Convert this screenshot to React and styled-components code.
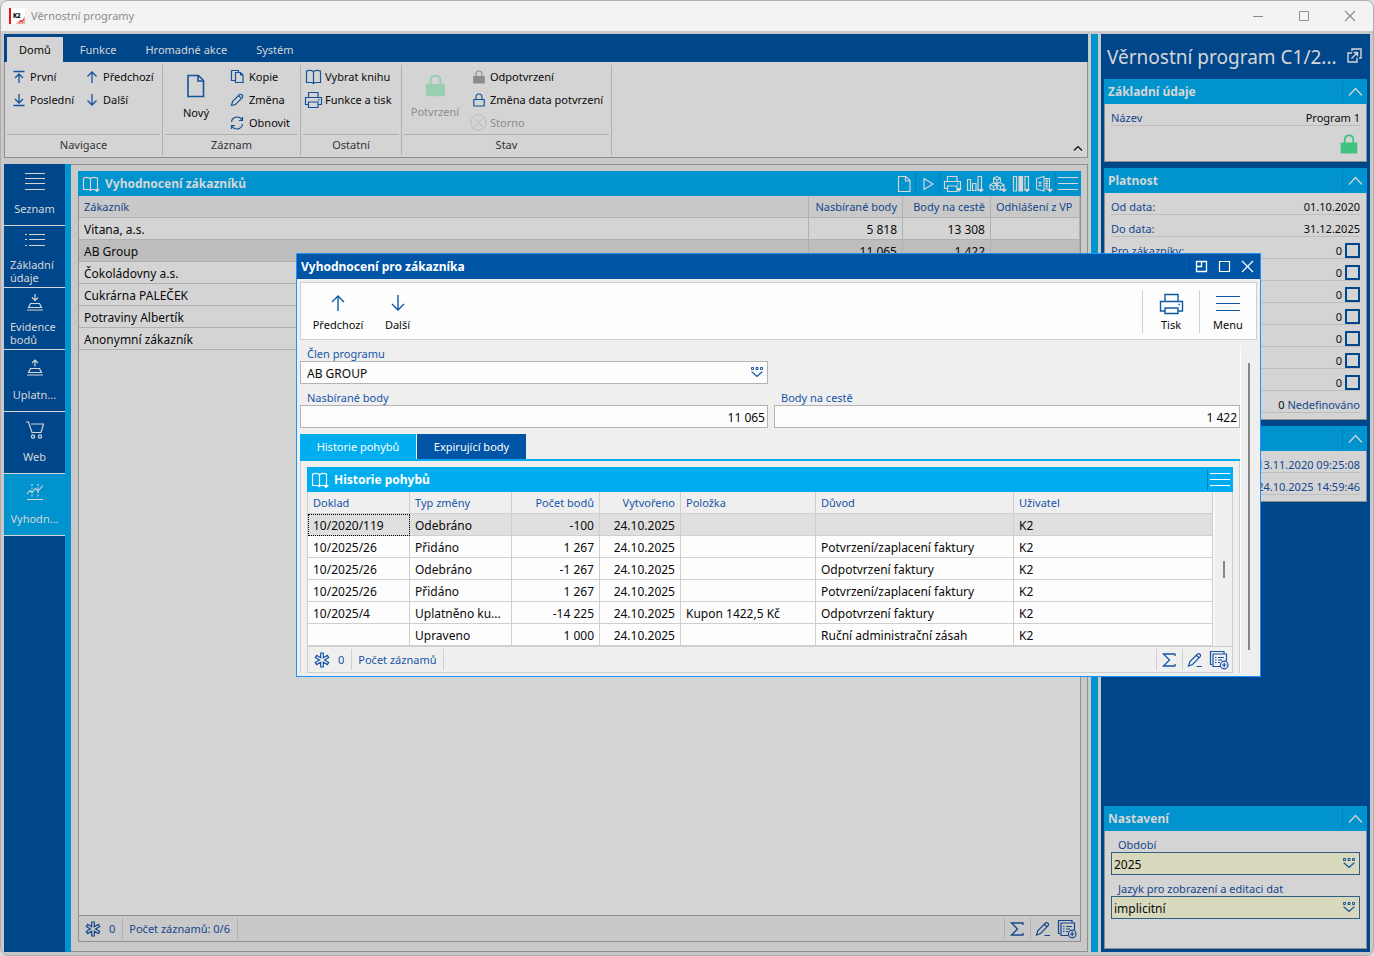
import React, { useState } from "react";
import styled, { createGlobalStyle } from "styled-components";

const GlobalStyle = createGlobalStyle`
  * {
    box-sizing: border-box;
  }
  body {
    margin: 0;
    background: #dcdcdc;
    color: #0a0a0a;
    font-family: "Noto Sans", "Open Sans", sans-serif;
    font-size: 12px;
    line-height: 16px;
  }
  button, input, select {
    font: inherit;
    color: inherit;
    margin: 0;
  }
  button {
    background: none;
    border: none;
    padding: 0;
    cursor: pointer;
  }
  h1, h2 {
    margin: 0;
  }
`;

// every icon is drawn on its own grid, w/h are the grid and the drawn size
const Icon = ({ w = 16, h = 16, sw = 1, children }) => (
  <IconSvg width={w} height={h} viewBox={`0 0 ${w} ${h}`} strokeWidth={sw}>
    {children}
  </IconSvg>
);

const K2Logo = () => (
  <Icon w={16} h={16}>
    <rect x="0" y="0" width="16" height="16" fill="#fff" stroke="none" />
    <rect x="0" y="0" width="2" height="16" fill="#e2122c" stroke="none" />
    <path d="M7 16 L10 12 L12 13 L16 8 V16 Z" fill="#f2a9a5" stroke="none" />
    <path d="M10 15 L12 12 L13 14 L15 11" stroke="#dc3a44" />
    <text
      x="4"
      y="10"
      fontSize="6"
      fontWeight="900"
      fill="#111"
      stroke="none"
      fontFamily="Open Sans"
    >
      K2
    </text>
  </Icon>
);
const FirstIcon = () => (
  <Icon w={14} h={14} sw={1.3}>
    <path d="M1.5 1.5 H12.5 M7 13 V4 M3 8 L7 4 L11 8" />
  </Icon>
);
const LastIcon = () => (
  <Icon w={14} h={14} sw={1.3}>
    <path d="M1.5 12.5 H12.5 M7 1 V10 M3 6 L7 10 L11 6" />
  </Icon>
);
const UpIcon = () => (
  <Icon w={14} h={14} sw={1.3}>
    <path d="M7 13 V2 M2.5 6.5 L7 2 L11.5 6.5" />
  </Icon>
);
const DownIcon = () => (
  <Icon w={14} h={14} sw={1.3}>
    <path d="M7 1 V12 M2.5 7.5 L7 12 L11.5 7.5" />
  </Icon>
);
const BigUpIcon = () => (
  <Icon w={18} h={20} sw={1.4}>
    <path d="M9 18 V3 M3 9 L9 3 L15 9" />
  </Icon>
);
const BigDownIcon = () => (
  <Icon w={18} h={20} sw={1.4}>
    <path d="M9 2 V17 M3 11 L9 17 L15 11" />
  </Icon>
);
const NewIcon = () => (
  <Icon w={20} h={24} sw={1.6}>
    <path d="M2 1.5 H12.5 L17.5 6.5 V22.5 H2 Z" />
    <path d="M12 1.5 V7 H17.5" />
  </Icon>
);
const PageIcon = () => (
  <Icon w={16} h={18} sw={1.2}>
    <path d="M2.5 1.5 H10 L14 5.5 V16.5 H2.5 Z M9.5 1.5 V6 H14" />
  </Icon>
);
const CopyIcon = () => (
  <Icon w={14} h={15} sw={1.2}>
    <path d="M5 11.5 H1.5 V1.5 H8.5 V3.5" />
    <path d="M5.5 3.5 H10.5 L13 6 V13.5 H5.5 Z M10.5 3.5 V6 H13" />
  </Icon>
);
const PencilIcon = () => (
  <Icon w={14} h={14} sw={1.2}>
    <path d="M1.5 12.5 L2.5 8.5 L9.5 1.5 Q11 0.8 12.2 2 Q13.2 3.2 12.5 4.5 L5.5 11.5 Z M8.5 2.7 L11.5 5.7" />
  </Icon>
);
const RefreshIcon = () => (
  <Icon w={14} h={14} sw={1.2}>
    <path d="M1.5 6 A5.6 5.6 0 0 1 12 4 M12.5 1 V4.5 H9 M12.5 8 A5.6 5.6 0 0 1 2 10 M1.5 13 V9.5 H5" />
  </Icon>
);
const BookIcon = ({ more }) => (
  <Icon w={18} h={18} sw={1.2}>
    <path d="M1.5 14.5 V3 Q5.5 1.5 8.5 3.5 Q11.5 1.5 15.5 3 V14.5 H10 L8.5 15.5 L7 14.5 Z M8.5 3.5 V15" />
    {more && (
      <path d="M12 14 H18 L15 17.5 Z" fill="currentColor" stroke="none" />
    )}
  </Icon>
);
const PrinterIcon = ({ more }) => (
  <Icon w={19} h={18} sw={1.2}>
    <path d="M4.5 6 V1.5 H14 V6 M4.5 13.5 H1.5 V6.5 H17.5 V13.5 H14 M4.5 11 H14 V16.5 H4.5 Z M14 8.8 H15.5" />
    {more && (
      <path d="M13 13.5 H19 L16 17 Z" fill="currentColor" stroke="none" />
    )}
  </Icon>
);
const BigPrinterIcon = () => (
  <Icon w={25} h={22} sw={1.4}>
    <path d="M6 8 V1.5 H19 V8 M6 18 H1.5 V8.5 H23.5 V18 H19 M6 15 H19 V20.5 H6 Z M19.5 11.5 H21" />
  </Icon>
);
const LockIcon = ({ size = 14, filled, color = "currentColor" }) => (
  <IconSvg
    width={size}
    height={size}
    viewBox="0 0 14 14"
    stroke={color}
    strokeWidth="1.2"
  >
    <path d="M4 6.5 V4.2 Q4 1 7 1 Q10 1 10 4.2 V6.5" />
    <path d="M1.8 6.5 H12.2 V13 H1.8 Z" fill={filled ? color : "none"} />
  </IconSvg>
);
const CancelIcon = () => (
  <Icon w={17} h={17} sw={1}>
    <circle cx="8.5" cy="8.5" r="7.7" />
    <path d="M4.5 4.5 L12.5 12.5 M12.5 4.5 L4.5 12.5" />
  </Icon>
);
const LinesIcon = ({ w = 20, h = 18, gap = 6 }) => (
  <Icon w={w} h={h} sw={1.2}>
    <path
      d={`M0 ${h / 2 - 0.5 - gap} H${w} M0 ${h / 2 - 0.5} H${w} M0 ${h / 2 - 0.5 + gap} H${w}`}
    />
  </Icon>
);
const ChevronIcon = ({ w = 16, h = 10 }) => (
  <Icon w={w} h={h} sw={1.2}>
    <path d={`M1 ${h - 1.5} L${w / 2} 1.5 L${w - 1} ${h - 1.5}`} />
  </Icon>
);
const PlayIcon = () => (
  <Icon w={14} h={16} sw={1.2}>
    <path d="M3 2.5 L12 8 L3 13.5 Z" />
  </Icon>
);
const ChartIcon = () => (
  <Icon w={18} h={18} sw={1.2}>
    <path d="M1.5 4.5 H4.5 V15.5 H1.5 Z M6.5 8.5 H10 V15.5 H6.5 Z M12 1.5 H15.5 V15.5 H12 Z" />
    <path d="M12 14 H18 L15 17.5 Z" fill="currentColor" stroke="none" />
  </Icon>
);
const CubesIcon = () => (
  <Icon w={18} h={18} sw={1.1}>
    <path d="M8 1.5 L11.5 3.2 V7 L8 8.8 L4.5 7 V3.2 Z M4.5 3.2 L8 5 L11.5 3.2 M8 5 V8.8" />
    <path d="M4.5 8 L8 9.8 V13.5 L4.5 15.2 L1 13.5 V9.8 Z M1 9.8 L4.5 11.5 L8 9.8 M4.5 11.5 V15" />
    <path d="M11.5 8 L15 9.8 V13.5 L11.5 15.2 L8 13.5 V9.8 M8 9.8 L11.5 11.5 L15 9.8 M11.5 11.5 V15" />
    <path d="M12 14 H18 L15 17.5 Z" fill="currentColor" stroke="none" />
  </Icon>
);
const ColumnsIcon = () => (
  <Icon w={18} h={18} sw={1.2}>
    <path d="M1.5 1.5 H4.5 V16 H1.5 Z M13 1.5 H16.5 V15 H13 Z" />
    <path d="M7 1.5 H10.5 V16 H7 Z" fill="currentColor" />
    <path d="M12 14 H18 L15 17.5 Z" fill="currentColor" stroke="none" />
  </Icon>
);
const ExcelIcon = () => (
  <Icon w={18} h={18} sw={1.1}>
    <path d="M1.5 3.5 L9 1.5 V16 L1.5 14 Z M9 3.5 H14.5 V14 H9 M3.5 6.5 L6.5 11.5 M6.5 6.5 L3.5 11.5" />
    <path d="M10 6 H13.5 M10 8.5 H13.5 M10 11 H13.5 M11.8 4 V13" />
    <path d="M12 14 H18 L15 17.5 Z" fill="currentColor" stroke="none" />
  </Icon>
);
const PopOutIcon = () => (
  <Icon w={15} h={15} sw={1.4}>
    <path d="M5 3 V1 H14 V10 H12 M5 5 H1 V14 H10 V10 M4.5 10.5 L10.5 4.5 M6.5 4.5 H10.5 V8.5" />
  </Icon>
);
const ListIcon = () => (
  <Icon w={22} h={18} sw={1.2}>
    <path d="M5 3.5 H21 M5 8.5 H21 M5 14.5 H21" />
    <path d="M1 3.5 H3 M1 8.5 H3 M1 14.5 H3" />
  </Icon>
);
const MenuLinesIcon = () => (
  <Icon w={22} h={20} sw={1.2}>
    <path d="M1 1.5 H21 M1 6.5 H21 M1 11.5 H21 M1 17.5 H21" />
  </Icon>
);
const DepositIcon = ({ up }) => (
  <Icon w={18} h={20} sw={1.2}>
    {up ? (
      <path d="M9 8.5 V2 M6 5 L9 2 L12 5" />
    ) : (
      <path d="M9 1 V7.5 M6 4.5 L9 7.5 L12 4.5" />
    )}
    <path d="M4.5 10.5 H13.5 L15.5 14.5 H2.5 Z M1 17 H17" />
  </Icon>
);
const CartIcon = () => (
  <Icon w={20} h={20} sw={1.2}>
    <path d="M1 2 H3.5 L7 12.5 H16 L18.5 4 H6" />
    <circle cx="8" cy="16.5" r="1.6" />
    <circle cx="15" cy="16.5" r="1.6" />
  </Icon>
);
const StatsIcon = () => (
  <Icon w={18} h={20} sw={1.1}>
    <path d="M1 12 L4 8.5 L6 10.5 L9.5 6.5 L12 9 L17 3.5 M1 17.5 H17" />
    <path d="M6 2 V16 M12 2 V16" strokeDasharray="2 1.5" />
  </Icon>
);
const StarIcon = () => (
  <Icon w={16} h={16} sw={1.2}>
    <path d="M6.7 1 H9.3 V5.7 L13.4 3.4 L14.7 5.6 L10.6 8 L14.7 10.4 L13.4 12.6 L9.3 10.3 V15 H6.7 V10.3 L2.6 12.6 L1.3 10.4 L5.4 8 L1.3 5.6 L2.6 3.4 L6.7 5.7 Z" />
  </Icon>
);
const SumIcon = () => (
  <Icon w={16} h={16} sw={1.3}>
    <path d="M14 4 V2 H2.5 L8.5 8 L2.5 14 H14 V12" />
  </Icon>
);
const EditLineIcon = () => (
  <Icon w={16} h={16} sw={1.2}>
    <path d="M1.5 14 L2.8 9.8 L10.5 2 Q11.8 1.2 13 2.2 Q14 3.5 13.2 4.6 L5.5 12.5 Z M9.3 3.2 L12 5.8 M9.5 14.5 H15" />
  </Icon>
);
const RecordsIcon = () => (
  <Icon w={20} h={20} sw={1.2}>
    <path d="M3 14.5 H1.5 V1.5 H15 V3.5 M11 16.5 H4 V4 H17.5 V11" />
    <path d="M6 7.5 H7.5 M9 7.5 H15 M6 10 H7.5 M9 10 H13 M6 12.5 H7.5 M9 12.5 H11" />
    <circle cx="15.2" cy="15" r="3.8" />
    <path d="M13 15 H17.4 M15.2 12.8 V17.2" />
  </Icon>
);
const DropIcon = () => (
  <Icon w={12} h={12} sw={1}>
    <path d="M0.5 1.5 H2.5 V3.5 H0.5 Z M5 1.5 H7 V3.5 H5 Z M9.5 1.5 H11.5 V3.5 H9.5 Z" />
    <path d="M1 5.5 V6 L6 10.5 L11 6 V5.5" strokeWidth="1.2" />
  </Icon>
);
const MinIcon = () => (
  <Icon w={12} h={12}>
    <path d="M1 6.5 H11" />
  </Icon>
);
const MaxIcon = ({ w = 12, sw = 1 }) => (
  <Icon w={w} h={w} sw={sw}>
    <path d={`M1.5 1.5 H${w - 1.5} V${w - 1.5} H1.5 Z`} />
  </Icon>
);
const CloseIcon = ({ w = 12 }) => (
  <Icon w={w} h={w} sw={1.2}>
    <path d={`M1 1 L${w - 1} ${w - 1} M${w - 1} 1 L1 ${w - 1}`} />
  </Icon>
);
const DockIcon = () => (
  <Icon w={13} h={13} sw={1.3}>
    <path d="M1.5 1.5 H11.5 V11.5 H1.5 Z M1.5 6.5 H6.5 V1.5" />
  </Icon>
);

const RIBBON_TABS = ["Domů", "Funkce", "Hromadné akce", "Systém"];

const SIDE_ITEMS = [
  { text: "Seznam", icon: <MenuLinesIcon /> },
  { text: "Základní údaje", icon: <ListIcon />, twoLines: true },
  { text: "Evidence bodů", icon: <DepositIcon />, twoLines: true },
  { text: "Uplatn...", icon: <DepositIcon up /> },
  { text: "Web", icon: <CartIcon /> },
  { text: "Vyhodn...", icon: <StatsIcon /> },
];

const CUSTOMERS = [
  { name: "Vitana, a.s.", points: "5 818", coming: "13 308" },
  { name: "AB Group", points: "11 065", coming: "1 422" },
  { name: "Čokoládovny a.s." },
  { name: "Cukrárna PALEČEK" },
  { name: "Potraviny Albertík" },
  { name: "Anonymní zákazník" },
];

const HISTORY_COLUMNS = [
  { text: "Doklad", width: 102 },
  { text: "Typ změny", width: 102 },
  { text: "Počet bodů", width: 88, right: true },
  { text: "Vytvořeno", width: 81, right: true },
  { text: "Položka", width: 135 },
  { text: "Důvod", width: 198 },
  { text: "Uživatel" },
];

const HISTORY = [
  ["10/2020/119", "Odebráno", "-100", "24.10.2025", "", "", "K2"],
  ["10/2025/26", "Přidáno", "1 267", "24.10.2025", "", "Potvrzení/zaplacení faktury", "K2"],
  ["10/2025/26", "Odebráno", "-1 267", "24.10.2025", "", "Odpotvrzení faktury", "K2"],
  ["10/2025/26", "Přidáno", "1 267", "24.10.2025", "", "Potvrzení/zaplacení faktury", "K2"],
  ["10/2025/4", "Uplatněno ku...", "-14 225", "24.10.2025", "Kupon 1422,5 Kč", "Odpotvrzení faktury", "K2"],
  ["", "Upraveno", "1 000", "24.10.2025", "", "Ruční administrační zásah", "K2"],
];

const CHECK_ROWS = ["Pro zákazníky:", "", "", "", "", "", ""];

const Ribbon = () => {
  const [tab, setTab] = useState("Domů");
  return (
    <header>
      <RibbonTabs>
        {RIBBON_TABS.map((t) => (
          <RibbonTab key={t} $active={t === tab} onClick={() => setTab(t)}>
            {t}
          </RibbonTab>
        ))}
      </RibbonTabs>
      <RibbonBody>
        <RibbonGroup $width={158}>
          <GroupTools>
            <ToolColumn $width={65}>
              <Tool><FirstIcon />První</Tool>
              <Tool><LastIcon />Poslední</Tool>
            </ToolColumn>
            <ToolColumn>
              <Tool><UpIcon />Předchozí</Tool>
              <Tool><DownIcon />Další</Tool>
            </ToolColumn>
          </GroupTools>
          <GroupTitle>Navigace</GroupTitle>
        </RibbonGroup>
        <RibbonGroup $width={138}>
          <GroupTools>
            <BigTool><NewIcon />Nový</BigTool>
            <ToolColumn>
              <Tool $gap={5}><CopyIcon />Kopie</Tool>
              <Tool $gap={5}><PencilIcon />Změna</Tool>
              <Tool $gap={5}><RefreshIcon />Obnovit</Tool>
            </ToolColumn>
          </GroupTools>
          <GroupTitle>Záznam</GroupTitle>
        </RibbonGroup>
        <RibbonGroup $width={101}>
          <GroupTools $tight>
            <ToolColumn>
              <Tool $gap={2}><ToolIcon><BookIcon /></ToolIcon>Vybrat knihu</Tool>
              <Tool $gap={2}><ToolIcon><PrinterIcon /></ToolIcon>Funkce a tisk</Tool>
            </ToolColumn>
          </GroupTools>
          <GroupTitle>Ostatní</GroupTitle>
        </RibbonGroup>
        <RibbonGroup $width={210}>
          <GroupTools>
            <BigTool $muted disabled>
              <LockIcon size={23} filled color="#97cfb0" />
              Potvrzení
            </BigTool>
            <ToolColumn>
              <Tool $gap={2}><ToolIcon><LockIcon filled color="#8a8d8d" /></ToolIcon>Odpotvrzení</Tool>
              <Tool $gap={2}><ToolIcon><LockIcon /></ToolIcon>Změna data potvrzení</Tool>
              <Tool $gap={2} $muted disabled><ToolIcon><CancelIcon /></ToolIcon>Storno</Tool>
            </ToolColumn>
          </GroupTools>
          <GroupTitle>Stav</GroupTitle>
        </RibbonGroup>
        <Collapse aria-label="Sbalit"><ChevronIcon w={10} h={7} /></Collapse>
      </RibbonBody>
    </header>
  );
};

const GridFooter = ({ text, dark }) => (
  <FooterBar $dark={dark}>
    <FooterCell $dark={dark}><StarIcon /><span>0</span></FooterCell>
    <FooterCell $dark={dark}>{text}</FooterCell>
    <FooterSpace $dark={dark} />
    <FooterButton $dark={dark} aria-label="Součet"><SumIcon /></FooterButton>
    <FooterTools>
      <button aria-label="Upravit"><EditLineIcon /></button>
      <button aria-label="Přidat"><RecordsIcon /></button>
    </FooterTools>
  </FooterBar>
);

const CustomersGrid = () => (
  <Grid $dark>
    <GridHeader $dark>
      <BookIcon more />
      <GridTitle>Vyhodnocení zákazníků</GridTitle>
      <HeaderTool aria-label="Nový"><PageIcon /></HeaderTool>
      <HeaderTool $line aria-label="Spustit"><PlayIcon /></HeaderTool>
      <HeaderTool $line aria-label="Tisk"><PrinterIcon more /></HeaderTool>
      <HeaderTool aria-label="Graf"><ChartIcon /></HeaderTool>
      <HeaderTool aria-label="Kostky"><CubesIcon /></HeaderTool>
      <HeaderTool aria-label="Sloupce"><ColumnsIcon /></HeaderTool>
      <HeaderTool aria-label="Excel"><ExcelIcon /></HeaderTool>
      <HeaderTool $line aria-label="Menu"><LinesIcon /></HeaderTool>
    </GridHeader>
    <GridBody $dark>
      <Table>
        <colgroup>
          <col />
          <col width="94" />
          <col width="88" />
          <col width="89" />
        </colgroup>
        <thead>
          <tr>
            <Th $dark>Zákazník</Th>
            <Th $dark $right>Nasbírané body</Th>
            <Th $dark $right>Body na cestě</Th>
            <Th $dark>Odhlášení z VP</Th>
          </tr>
        </thead>
        <tbody>
          {CUSTOMERS.map((c, index) => (
            <Row key={c.name} $dark $selected={index === 1}>
              <Td $dark>{c.name}</Td>
              <Td $dark $right>{c.points}</Td>
              <Td $dark $right>{c.coming}</Td>
              <Td $dark />
            </Row>
          ))}
        </tbody>
      </Table>
    </GridBody>
    <GridFooter dark text="Počet záznamů: 0/6" />
  </Grid>
);

const Section = ({ title, children }) => (
  <section>
    <SectionHeader>
      <h2>{title}</h2>
      <SectionToggle aria-label="Sbalit"><ChevronIcon w={15} /></SectionToggle>
    </SectionHeader>
    <SectionBody>{children}</SectionBody>
  </section>
);

const InfoPanel = () => (
  <Aside>
    <AsideTitle>
      <h1>Věrnostní program C1/2...</h1>
      <button aria-label="Otevřít"><PopOutIcon /></button>
    </AsideTitle>
    <Section title="Základní údaje">
      <InfoRow>
        <InfoLabel>Název</InfoLabel>
        <span>Program 1</span>
      </InfoRow>
      <LockRow><LockIcon size={20} filled color="#3fc380" /></LockRow>
    </Section>
    <Section title="Platnost">
      <InfoRow><InfoLabel>Od data:</InfoLabel><span>01.10.2020</span></InfoRow>
      <InfoRow><InfoLabel>Do data:</InfoLabel><span>31.12.2025</span></InfoRow>
      {CHECK_ROWS.map((text, index) => (
        <InfoRow as="label" key={index}>
          <InfoLabel>{text}</InfoLabel>
          <CheckValue>
            0
            <CheckBox type="checkbox" />
          </CheckValue>
        </InfoRow>
      ))}
      <InfoRow>
        <span />
        <span>0 <InfoLabel>Nedefinováno</InfoLabel></span>
      </InfoRow>
    </Section>
    <Section>
      <InfoRow><span /><InfoLabel>13.11.2020 09:25:08</InfoLabel></InfoRow>
      <InfoRow><span /><InfoLabel>24.10.2025 14:59:46</InfoLabel></InfoRow>
    </Section>
    <Filler />
    <Section title="Nastavení">
      <SettingsForm>
        <FieldLabel $dark htmlFor="period">Období</FieldLabel>
        <SelectBox>
          <Select $dark id="period"><option>2025</option></Select>
          <SelectMark $dark><DropIcon /></SelectMark>
        </SelectBox>
        <FieldLabel $dark htmlFor="lang">Jazyk pro zobrazení a editaci dat</FieldLabel>
        <SelectBox>
          <Select $dark id="lang"><option>implicitní</option></Select>
          <SelectMark $dark><DropIcon /></SelectMark>
        </SelectBox>
      </SettingsForm>
    </Section>
  </Aside>
);

const CustomerDialog = () => (
  <Overlay>
    <Dialog role="dialog" aria-labelledby="dialog-title">
      <DialogHeader>
        <h2 id="dialog-title">Vyhodnocení pro zákazníka</h2>
        <DialogControls>
          <button aria-label="Ukotvit"><DockIcon /></button>
          <button aria-label="Maximalizovat"><MaxIcon w={13} sw={1.2} /></button>
          <button aria-label="Zavřít"><CloseIcon w={13} /></button>
        </DialogControls>
      </DialogHeader>
      <DialogBody>
        <DialogToolbar>
          <DialogTool $width={64}><BigUpIcon />Předchozí</DialogTool>
          <DialogTool $width={55}><BigDownIcon />Další</DialogTool>
          <ToolbarSpace />
          <DialogTool $line $width={57}><BigPrinterIcon />Tisk</DialogTool>
          <DialogTool $line $width={57}><LinesIcon w={24} h={22} gap={7} />Menu</DialogTool>
        </DialogToolbar>
        <DialogScroll>
          <DialogForm>
            <FieldRow>
              <div>
                <FieldLabel htmlFor="member">Člen programu</FieldLabel>
                <SelectBox>
                  <Select id="member"><option>AB GROUP</option></Select>
                  <SelectMark><DropIcon /></SelectMark>
                </SelectBox>
              </div>
            </FieldRow>
            <FieldRow>
              <div>
                <FieldLabel htmlFor="points">Nasbírané body</FieldLabel>
                <NumberInput id="points" defaultValue="11 065" />
              </div>
              <div>
                <FieldLabel htmlFor="coming">Body na cestě</FieldLabel>
                <NumberInput id="coming" defaultValue="1 422" />
              </div>
            </FieldRow>
            <DialogTabs>
              <DialogTab $active $width={116}>Historie pohybů</DialogTab>
              <DialogTab $width={109}>Expirující body</DialogTab>
            </DialogTabs>
            <TabPanel>
              <Grid>
                <GridHeader>
                  <BookIcon more />
                  <GridTitle>Historie pohybů</GridTitle>
                  <HeaderTool $line aria-label="Menu"><LinesIcon /></HeaderTool>
                </GridHeader>
                <GridBody>
                  <Table>
                    <colgroup>
                      {HISTORY_COLUMNS.map((c) => (
                        <col key={c.text} width={c.width} />
                      ))}
                    </colgroup>
                    <thead>
                      <tr>
                        {HISTORY_COLUMNS.map((c) => (
                          <Th key={c.text} $right={c.right}>{c.text}</Th>
                        ))}
                      </tr>
                    </thead>
                    <tbody>
                      {HISTORY.map((row, index) => (
                        <Row key={index} $selected={index === 0}>
                          {row.map((cell, i) => (
                            <Td
                              key={i}
                              $right={HISTORY_COLUMNS[i].right}
                              $focused={index === 0 && i === 0}
                            >
                              {cell}
                            </Td>
                          ))}
                        </Row>
                      ))}
                    </tbody>
                  </Table>
                  <InnerTrack><InnerThumb /></InnerTrack>
                </GridBody>
                <GridFooter text="Počet záznamů" />
              </Grid>
            </TabPanel>
          </DialogForm>
          <OuterTrack><OuterThumb /></OuterTrack>
        </DialogScroll>
      </DialogBody>
    </Dialog>
  </Overlay>
);

const App = () => {
  const [active, setActive] = useState("Vyhodn...");
  return (
    <>
      <GlobalStyle />
      <Window>
        <TitleBar>
          <K2Logo />
          <WindowTitle>Věrnostní programy</WindowTitle>
          <WindowControl aria-label="Minimalizovat"><MinIcon /></WindowControl>
          <WindowControl aria-label="Maximalizovat"><MaxIcon /></WindowControl>
          <WindowControl aria-label="Zavřít"><CloseIcon /></WindowControl>
        </TitleBar>
        <Content>
          <Main>
            <Ribbon />
            <WorkArea>
              <SideBar>
                {SIDE_ITEMS.map((item) => (
                  <SideItem
                    key={item.text}
                    $active={item.text === active}
                    $twoLines={item.twoLines}
                    onClick={() => setActive(item.text)}
                  >
                    {item.icon}
                    <SideText $twoLines={item.twoLines}>{item.text}</SideText>
                  </SideItem>
                ))}
              </SideBar>
              <GridFrame>
                <CustomersGrid />
              </GridFrame>
            </WorkArea>
          </Main>
          <Splitter />
          <InfoPanel />
        </Content>
        <CustomerDialog />
      </Window>
    </>
  );
};

export default App;

const IconSvg = styled.svg`
  display: block;
  flex: none;
  fill: none;
  stroke: ${(p) => p.stroke || "currentColor"};
`;

const Window = styled.div`
  position: relative;
  display: flex;
  flex-direction: column;
  min-height: 100vh;
  border: 1px solid #aeaeae;
  border-radius: 8px;
  background: #c9c9c9;
  overflow: hidden;
`;

const TitleBar = styled.div`
  display: flex;
  align-items: center;
  height: 30px;
  padding-left: 8px;
  background: #f3f3f3;
  color: #8c8c8c;
`;

const WindowTitle = styled.div`
  flex: 1;
  padding-left: 6px;
  font-size: 11px;
`;

const WindowControl = styled.button`
  display: flex;
  align-items: center;
  justify-content: center;
  width: 46px;
  height: 30px;
`;

const Content = styled.div`
  flex: 1;
  display: flex;
  gap: 3px;
  padding: 3px;
`;

const Main = styled.main`
  flex: 1;
  min-width: 0;
  display: flex;
  flex-direction: column;
  gap: 6px;
`;

const Splitter = styled.div`
  width: 7px;
  background: #0093cd;
`;

/* ribbon */

const RibbonTabs = styled.nav`
  display: flex;
  height: 28px;
  padding: 3px 3px 0;
  background: #00468b;
`;

const RibbonTab = styled.button`
  padding: 0 12px;
  margin-right: 5px;
  font-size: 11px;
  background: ${(p) => (p.$active ? "#d4d4d4" : "transparent")};
  color: ${(p) => (p.$active ? "#0a0a0a" : "#d6d6d6")};
`;

const RibbonBody = styled.div`
  display: flex;
  height: 96px;
  padding: 3px 0 2px;
  border: 1px solid #8f8f8f;
  border-top: none;
  background: #d4d4d4;
  font-size: 11px;
`;

const RibbonGroup = styled.div`
  display: flex;
  flex-direction: column;
  width: ${(p) => p.$width}px;
  padding: 0 2px;
  border-right: 1px solid #b0b0b0;
`;

const GroupTools = styled.div`
  flex: 1;
  display: flex;
  gap: 8px;
  padding: 0 ${(p) => (p.$tight ? 1 : 5)}px;
`;

const GroupTitle = styled.div`
  height: 21px;
  border-top: 1px solid #b0b0b0;
  line-height: 20px;
  text-align: center;
  color: #333333;
`;

const ToolColumn = styled.div`
  width: ${(p) => (p.$width ? p.$width + "px" : "auto")};
`;

const Tool = styled.button`
  display: flex;
  align-items: center;
  gap: ${(p) => p.$gap || 4}px;
  height: 23px;
  white-space: nowrap;
  color: ${(p) => (p.$muted ? "#8c8c8c" : "#0a0a0a")};
  svg {
    color: ${(p) => (p.$muted ? "#b8b8b8" : "#14529a")};
  }
`;

const ToolIcon = styled.span`
  display: flex;
  justify-content: center;
  width: 19px;
`;

const BigTool = styled.button`
  display: flex;
  flex-direction: column;
  align-items: center;
  justify-content: center;
  gap: 7px;
  width: 52px;
  padding-bottom: 5px;
  color: ${(p) => (p.$muted ? "#8c8c8c" : "#0a0a0a")};
  svg {
    color: #14529a;
  }
`;

const Collapse = styled.button`
  align-self: flex-end;
  margin: 0 4px 3px auto;
`;

/* left navigation */

const WorkArea = styled.div`
  flex: 1;
  display: flex;
`;

const SideBar = styled.nav`
  width: 67px;
  border-right: 6px solid #0093cd;
  background: #00468b;
`;

const SideItem = styled.button`
  display: flex;
  flex-direction: column;
  align-items: center;
  justify-content: space-between;
  width: 100%;
  height: 62px;
  padding: ${(p) => (p.$twoLines ? "5px 0 3px" : "8px 0 10px")};
  border-bottom: 1px solid #d6d6d6;
  background: ${(p) => (p.$active ? "#0093cd" : "transparent")};
  color: #d6d6d6;
  font-size: 11px;
  line-height: 13px;
`;

const SideText = styled.span`
  width: 100%;
  padding: 0 6px;
  text-align: ${(p) => (p.$twoLines ? "left" : "center")};
`;

const GridFrame = styled.div`
  flex: 1;
  display: flex;
  min-width: 0;
  padding: 6px 6px 9px 7px;
  border: 1px solid #8f8f8f;
  border-left: none;
`;

/* grids */

const Grid = styled.div`
  flex: 1;
  display: flex;
  flex-direction: column;
  min-width: 0;
  background: ${(p) => (p.$dark ? "#c9c9c9" : "#efefef")};
`;

const GridHeader = styled.div`
  display: flex;
  align-items: center;
  height: 25px;
  padding: 0 2px 0 4px;
  background: ${(p) => (p.$dark ? "#0093cd" : "#00aeef")};
  color: ${(p) => (p.$dark ? "#d6d6d6" : "#ffffff")};
`;

const GridTitle = styled.h2`
  flex: 1;
  padding-left: 5px;
  font-size: 12px;
  line-height: 18px;
`;

const HeaderTool = styled.button`
  display: flex;
  align-items: center;
  justify-content: center;
  min-width: ${(p) => (p.$line ? 24 : 23)}px;
  height: 21px;
  padding-left: ${(p) => (p.$line ? 1 : 0)}px;
  border-left: ${(p) => (p.$line ? "1px solid #0080b5" : "none")};
`;

const GridBody = styled.div`
  flex: 1;
  display: flex;
  align-items: flex-start;
  border: 1px solid ${(p) => (p.$dark ? "#8f8f8f" : "#cfcfcf")};
  border-width: 0 1px;
  background: ${(p) => (p.$dark ? "#d4d4d4" : "#efefef")};
`;

const Table = styled.table`
  flex: 1;
  width: 100%;
  min-width: 0;
  table-layout: fixed;
  border-collapse: separate;
  border-spacing: 0;
`;

const Th = styled.th`
  height: 22px;
  padding: 0 5px;
  border: 1px solid ${(p) => (p.$dark ? "#b0b0b0" : "#cfcfcf")};
  border-width: 0 1px 1px 0;
  background: ${(p) => (p.$dark ? "#c9c9c9" : "#efefef")};
  color: ${(p) => (p.$dark ? "#14478c" : "#1655a6")};
  font-size: 11px;
  font-weight: 400;
  text-align: ${(p) => (p.$right ? "right" : "left")};
  white-space: nowrap;
`;

const Td = styled.td`
  height: 22px;
  padding: 2px 5px 0;
  border: 1px solid ${(p) => (p.$dark ? "#b0b0b0" : "#cfcfcf")};
  border-width: 0 1px 1px 0;
  text-align: ${(p) => (p.$right ? "right" : "left")};
  white-space: nowrap;
  outline: ${(p) => (p.$focused ? "1px dotted #000" : "none")};
  outline-offset: -1px;
`;

const Row = styled.tr`
  background: ${(p) =>
    p.$dark
      ? p.$selected
        ? "#bdbdbd"
        : "#d4d4d4"
      : p.$selected
        ? "#dfdfdf"
        : "#fdfdfd"};
`;

const FooterBar = styled.div`
  display: flex;
  height: 27px;
  padding: 2px 0;
  border: 1px solid ${(p) => (p.$dark ? "#8f8f8f" : "#cfcfcf")};
  color: ${(p) => (p.$dark ? "#14478c" : "#1655a6")};
  font-size: 11px;
`;

const FooterCell = styled.div`
  display: flex;
  align-items: center;
  gap: 8px;
  padding: 0 7px 0 6px;
  border-right: 1px solid ${(p) => (p.$dark ? "#b0b0b0" : "#cfcfcf")};
`;

const FooterButton = styled.button`
  width: 26px;
  padding-left: 4px;
  border-right: 1px solid ${(p) => (p.$dark ? "#b0b0b0" : "#cfcfcf")};
`;

const FooterSpace = styled.div`
  flex: 1;
  border-right: 1px solid ${(p) => (p.$dark ? "#b0b0b0" : "#cfcfcf")};
`;

const FooterTools = styled.div`
  display: flex;
  align-items: center;
  gap: 6px;
  padding: 0 3px 0 4px;
`;

const InnerTrack = styled.div`
  align-self: stretch;
  display: flex;
  align-items: center;
  justify-content: center;
  width: 19px;
  border-left: 2px solid #f8f8f8;
`;

const InnerThumb = styled.div`
  width: 2px;
  height: 17px;
  background: #868686;
`;

/* right panel */

const Aside = styled.aside`
  display: flex;
  flex-direction: column;
  gap: 6px;
  width: 269px;
  padding: 0 3px 3px;
  background: #00468b;
  font-size: 11px;
`;

const AsideTitle = styled.div`
  display: flex;
  justify-content: space-between;
  height: 39px;
  padding: 8px 5px 0 3px;
  color: #d6d6d6;
  h1 {
    font-size: 19px;
    font-weight: 400;
    line-height: 30px;
    white-space: nowrap;
  }
  button {
    height: 26px;
  }
`;

const SectionHeader = styled.div`
  display: flex;
  align-items: center;
  justify-content: space-between;
  height: 25px;
  padding-left: 4px;
  background: #0093cd;
  color: #d6d6d6;
  h2 {
    font-size: 12px;
  }
`;

const SectionToggle = styled.button`
  display: flex;
  align-items: center;
  justify-content: center;
  width: 25px;
  height: 21px;
  border-left: 1px solid #0080b5;
`;

const SectionBody = styled.div`
  padding: 0 6px 6px;
  border: 1px solid #8f8f8f;
  border-top: none;
  background: #d4d4d4;
`;

const InfoRow = styled.div`
  display: flex;
  align-items: center;
  justify-content: space-between;
  height: 22px;
  padding-top: 6px;
  border-bottom: 1px solid #bebebe;
`;

const InfoLabel = styled.span`
  color: #14478c;
`;

const LockRow = styled.div`
  display: flex;
  justify-content: flex-end;
  padding: 8px 1px 1px;
`;

const CheckValue = styled.span`
  display: flex;
  align-items: center;
  gap: 3px;
`;

const CheckBox = styled.input`
  appearance: none;
  width: 15px;
  height: 15px;
  border: 2px solid #00468b;
`;

const Filler = styled.div`
  flex: 1;
`;

const SettingsForm = styled.div`
  display: flex;
  flex-direction: column;
  padding: 6px 0 17px;
`;

const FieldLabel = styled.label`
  display: block;
  height: 15px;
  padding-left: 7px;
  color: ${(p) => (p.$dark ? "#14478c" : "#1655a6")};
  font-size: 11px;
  line-height: 15px;
`;

const SelectBox = styled.div`
  position: relative;
  margin-bottom: 6px;
`;

const Select = styled.select`
  appearance: none;
  display: block;
  width: 100%;
  height: 23px;
  padding: 2px ${(p) => (p.$dark ? 2 : 6)}px 0;
  border: 1px solid ${(p) => (p.$dark ? "#2f5f84" : "#b4b4b4")};
  border-radius: 0;
  background: ${(p) => (p.$dark ? "#d7d8bc" : "#fdfdfd")};
  font-size: 12px;
`;

const SelectMark = styled.span`
  position: absolute;
  top: 5px;
  right: 5px;
  color: ${(p) => (p.$dark ? "#14529a" : "#1655a6")};
  pointer-events: none;
`;

/* dialog */

const Overlay = styled.div`
  position: absolute;
  inset: 0;
  padding: 252px 112px 0 295px;
`;

const Dialog = styled.div`
  border: 1px solid #1e90ff;
  background: #efefef;
`;

const DialogHeader = styled.div`
  display: flex;
  align-items: center;
  justify-content: space-between;
  height: 25px;
  padding: 0 6px 0 4px;
  background: #0055a6;
  color: #ffffff;
  h2 {
    font-size: 12px;
  }
`;

const DialogControls = styled.div`
  display: flex;
  align-items: center;
  gap: 10px;
  height: 21px;
  padding-left: 5px;
  border-left: 1px solid #004a94;
`;

const DialogBody = styled.div`
  display: flex;
  flex-direction: column;
  gap: 6px;
  padding: 3px;
`;

const DialogToolbar = styled.div`
  display: flex;
  height: 58px;
  padding: 7px 0 6px 5px;
  border: 1px solid #cfcfcf;
  background: #fdfdfd;
`;

const DialogTool = styled.button`
  display: flex;
  flex-direction: column;
  align-items: center;
  justify-content: space-between;
  width: ${(p) => p.$width}px;
  padding-top: 3px;
  border-left: ${(p) => (p.$line ? "1px solid #cfcfcf" : "none")};
  font-size: 11px;
  svg {
    color: #0f58a8;
  }
`;

const ToolbarSpace = styled.div`
  flex: 1;
`;

const DialogScroll = styled.div`
  display: flex;
`;

const DialogForm = styled.div`
  flex: 1;
  min-width: 0;
`;

const FieldRow = styled.div`
  display: grid;
  grid-template-columns: 468px 1fr;
  column-gap: 6px;
`;

const NumberInput = styled.input`
  display: block;
  width: 100%;
  height: 23px;
  margin-bottom: 6px;
  padding: 2px 2px 0;
  border: 1px solid #b4b4b4;
  background: #fdfdfd;
  text-align: right;
`;

const DialogTabs = styled.div`
  display: flex;
  gap: 1px;
  border-bottom: 2px solid #00aeef;
`;

const DialogTab = styled.button`
  width: ${(p) => p.$width}px;
  height: 25px;
  background: ${(p) => (p.$active ? "#00aeef" : "#0055a6")};
  color: #ffffff;
  font-size: 11px;
`;

const TabPanel = styled.div`
  display: flex;
  padding: 6px 6px 0;
  border: 1px solid #cfcfcf;
  border-width: 0 1px;
`;

const OuterTrack = styled.div`
  width: 17px;
  padding: 17px 0 23px 7px;
  border-left: 1px solid #fdfdfd;
`;

const OuterThumb = styled.div`
  width: 2px;
  height: 100%;
  background: #868686;
`;
